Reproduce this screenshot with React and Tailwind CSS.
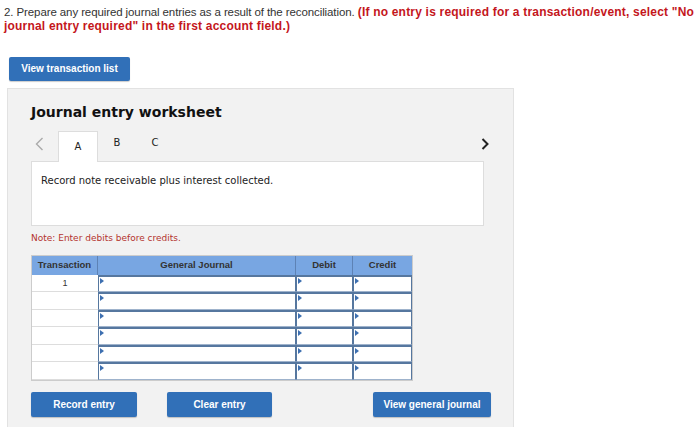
import React from 'react';

const rows = [1, 2, 3, 4, 5, 6];

function Marker() {
  return (
    <span className="absolute left-[1px] top-[1px] w-0 h-0 border-y-[3px] border-y-transparent border-l-[4px] border-l-[#3d6fb0]" />
  );
}

function InputCell({ w }) {
  return (
    <div className={`relative ${w} h-full bg-white border-x border-[#56779f] border-t-2 border-b border-b-[#9fb3cc]`}>
      <Marker />
    </div>
  );
}

export default function App() {
  return (
    <div className="w-[700px] h-[427px] bg-white overflow-hidden" style={{ fontFamily: '"Liberation Sans", Arial, sans-serif' }}>
      <p className="pl-[4px] pt-[5px] text-[11.5px] leading-[14px] text-[#333] tracking-[-0.1px]">
        2. Prepare any required journal entries as a result of the reconciliation.{' '}
        <span className="font-bold text-[#c4161c] text-[12px] leading-[14px] tracking-[0.2px]">
          (If no entry is required for a transaction/event, select "No journal entry required" in the first account field.)
        </span>
      </p>

      <div className="pl-[9px] pt-[22px]">
        <button className="w-[121px] h-[24px] rounded-[2px] bg-[#3170b8] text-white text-[10px] font-bold shadow-[0_1px_1px_rgba(0,0,0,0.2)]">
          View transaction list
        </button>
      </div>

      <div className="ml-[7px] mt-[7px] w-[507px] h-[345px] bg-[#f2f2f2] border border-[#e2e2e2] pl-[23px]" style={{ fontFamily: '"DejaVu Sans", Verdana, sans-serif' }}>
        <h1 className="pt-[14px] text-[14px] leading-[18px] font-bold text-[#111]">Journal entry worksheet</h1>

        <div className="flex items-end mt-[9px] h-[31px] pr-[22px]">
          <span className="w-[27px] pl-[4px] pb-[10px]">
            <svg width="9" height="14" viewBox="0 0 9 14"><path d="M7.5 1 L1.5 7 L7.5 13" fill="none" stroke="#aaa" strokeWidth="1.4" /></svg>
          </span>
          <div className="w-[40px] h-[31px] bg-white border border-[#ddd] border-b-0 flex items-center justify-center text-[10px] text-[#222] relative z-10 -mb-[1px] pb-[1px]">A</div>
          <span className="w-[38px] text-center pb-[11px] text-[10px] text-[#222]">B</span>
          <span className="w-[38px] text-center pb-[11px] text-[10px] text-[#222]">C</span>
          <span className="ml-auto pb-[11px] pr-[2px]">
            <svg width="8" height="12" viewBox="0 0 8 12"><path d="M1.5 1 L6.5 6 L1.5 11" fill="none" stroke="#222" strokeWidth="2" /></svg>
          </span>
        </div>

        <div className="w-[453px] h-[65px] bg-white border border-[#ddd] pl-[9px] pt-[11px] text-[10px] text-[#222]">
          Record note receivable plus interest collected.
        </div>

        <p className="mt-[6px] text-[9px] leading-[12px] text-[#b4332e]">Note: Enter debits before credits.</p>

        <div className="mt-[11px] w-[382px] border border-[#ccc] bg-white" style={{ fontFamily: '"Liberation Sans", Arial, sans-serif' }}>
          <div className="flex h-[19px] bg-[#78a6e2] text-[9.5px] font-bold text-[#333]">
            <div className="w-[66px] flex items-center justify-center border-r border-[#5d82b5]">Transaction</div>
            <div className="w-[198px] flex items-center justify-center border-r border-[#5d82b5]">General Journal</div>
            <div className="w-[57px] flex items-center justify-center border-r border-[#5d82b5]">Debit</div>
            <div className="flex-1 flex items-center justify-center">Credit</div>
          </div>
          {rows.map((r) => (
            <div key={r} className="flex h-[17.6px]">
              <div className="w-[66px] h-full border-b border-[#ddd] flex justify-center pt-[2px] text-[9px] text-[#333]">
                {r === 1 ? '1' : ''}
              </div>
              <InputCell w="w-[198px]" />
              <InputCell w="w-[57px]" />
              <InputCell w="flex-1" />
            </div>
          ))}
        </div>

        <div className="flex mt-[11px] pr-[22px]" style={{ fontFamily: '"Liberation Sans", Arial, sans-serif' }}>
          <button className="w-[106px] h-[25px] rounded-[2px] bg-[#3170b8] text-white text-[10px] font-bold shadow-[0_1px_1px_rgba(0,0,0,0.2)]">Record entry</button>
          <button className="ml-[30px] w-[105px] h-[25px] rounded-[2px] bg-[#3170b8] text-white text-[10px] font-bold shadow-[0_1px_1px_rgba(0,0,0,0.2)]">Clear entry</button>
          <button className="ml-auto w-[118px] h-[25px] rounded-[2px] bg-[#3170b8] text-white text-[10px] font-bold shadow-[0_1px_1px_rgba(0,0,0,0.2)]">View general journal</button>
        </div>
      </div>
    </div>
  );
}
